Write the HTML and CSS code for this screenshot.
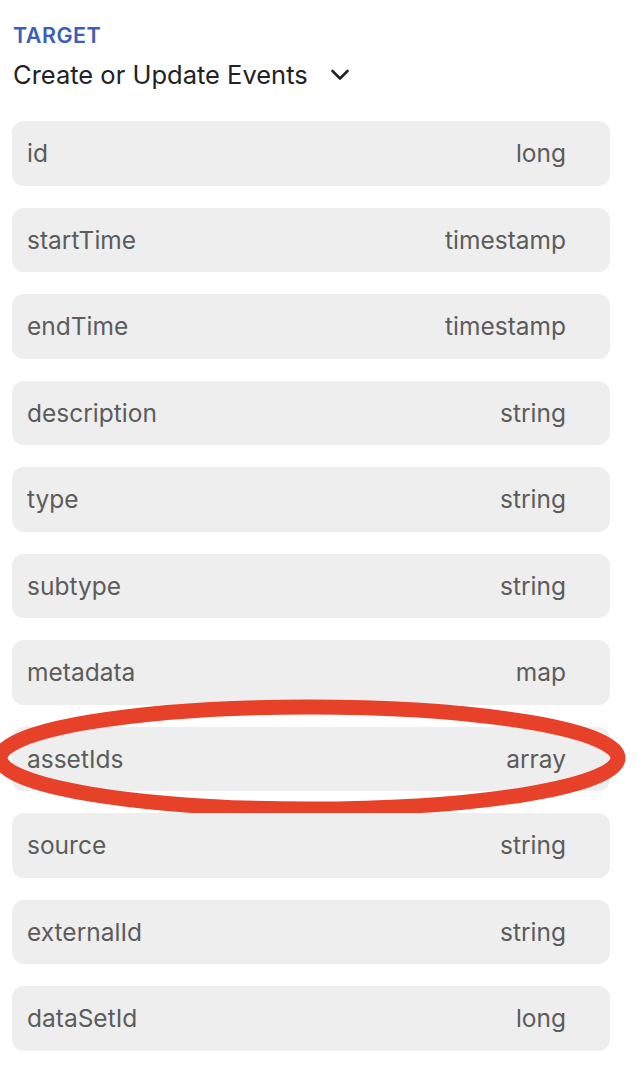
FILE: index.html
```html
<!DOCTYPE html>
<html lang="en">

<head>
    <meta charset="UTF-8">
    <meta name="viewport" content="width=device-width, initial-scale=1.0">
    <title>Target mapping</title>
    <link rel="stylesheet" href="styles.css">
</head>

<body>
    <!-- Target section with the selected action -->
    <div id="panel">
        <div class="section-label">TARGET</div>
        <div class="target-select">
            <span>Create or Update Events</span>
            <svg class="chevron" width="20" height="20" viewBox="0 0 20 20">
                <path d="M2.5 6 L10 13.5 L17.5 6" fill="none" stroke="#222" stroke-width="2.6" stroke-linecap="round" stroke-linejoin="round"/>
            </svg>
        </div>

        <!-- List of target fields -->
        <div class="field-list">
            <div class="field"><span>id</span><span>long</span></div>
            <div class="field"><span>startTime</span><span>timestamp</span></div>
            <div class="field"><span>endTime</span><span>timestamp</span></div>
            <div class="field"><span>description</span><span>string</span></div>
            <div class="field"><span>type</span><span>string</span></div>
            <div class="field"><span>subtype</span><span>string</span></div>
            <div class="field"><span>metadata</span><span>map</span></div>
            <div class="field highlighted"><span>assetIds</span><span>array</span>
                <svg class="marker" width="640" height="130" viewBox="0 0 640 130">
                    <ellipse cx="312" cy="64" rx="309" ry="51" fill="none" stroke="#e8412a" stroke-width="15"/>
                </svg>
            </div>
            <div class="field"><span>source</span><span>string</span></div>
            <div class="field"><span>externalId</span><span>string</span></div>
            <div class="field"><span>dataSetId</span><span>long</span></div>
        </div>
    </div>
</body>

</html>
```

FILE: styles.css
```css
/* Basic styling for the page */
body {
    background-color: #ffffff;
    font-family: 'Inter', 'Liberation Sans', sans-serif;
    margin: 0;
}

/* Main panel */
#panel {
    padding: 21px 28px 0 12px;
}

/* Small blue section heading */
.section-label {
    color: #3d5eb8;
    font-size: 21.5px;
    font-weight: 600;
    letter-spacing: 0.5px;
    line-height: 28px;
    padding-left: 1px;
}

/* Selected target with dropdown chevron */
.target-select {
    display: flex;
    align-items: center;
    gap: 22px;
    color: #222222;
    font-size: 25.5px;
    line-height: 32px;
    margin-top: 10px;
    padding-left: 1px;
}

.chevron {
    display: block;
}

/* Field rows */
.field-list {
    display: flex;
    flex-direction: column;
    gap: 22px;
    margin-top: 30px;
}

.field {
    position: relative;
    display: flex;
    justify-content: space-between;
    align-items: center;
    height: 64.5px;
    padding: 0 44px 0 15px;
    background-color: #eeeeee;
    border-radius: 12px;
    color: #5c5c5c;
    font-size: 24.5px;
}

/* Red hand-drawn marker round the highlighted row */
.highlighted .marker {
    position: absolute;
    left: -15px;
    top: -33px;
    pointer-events: none;
}
```
